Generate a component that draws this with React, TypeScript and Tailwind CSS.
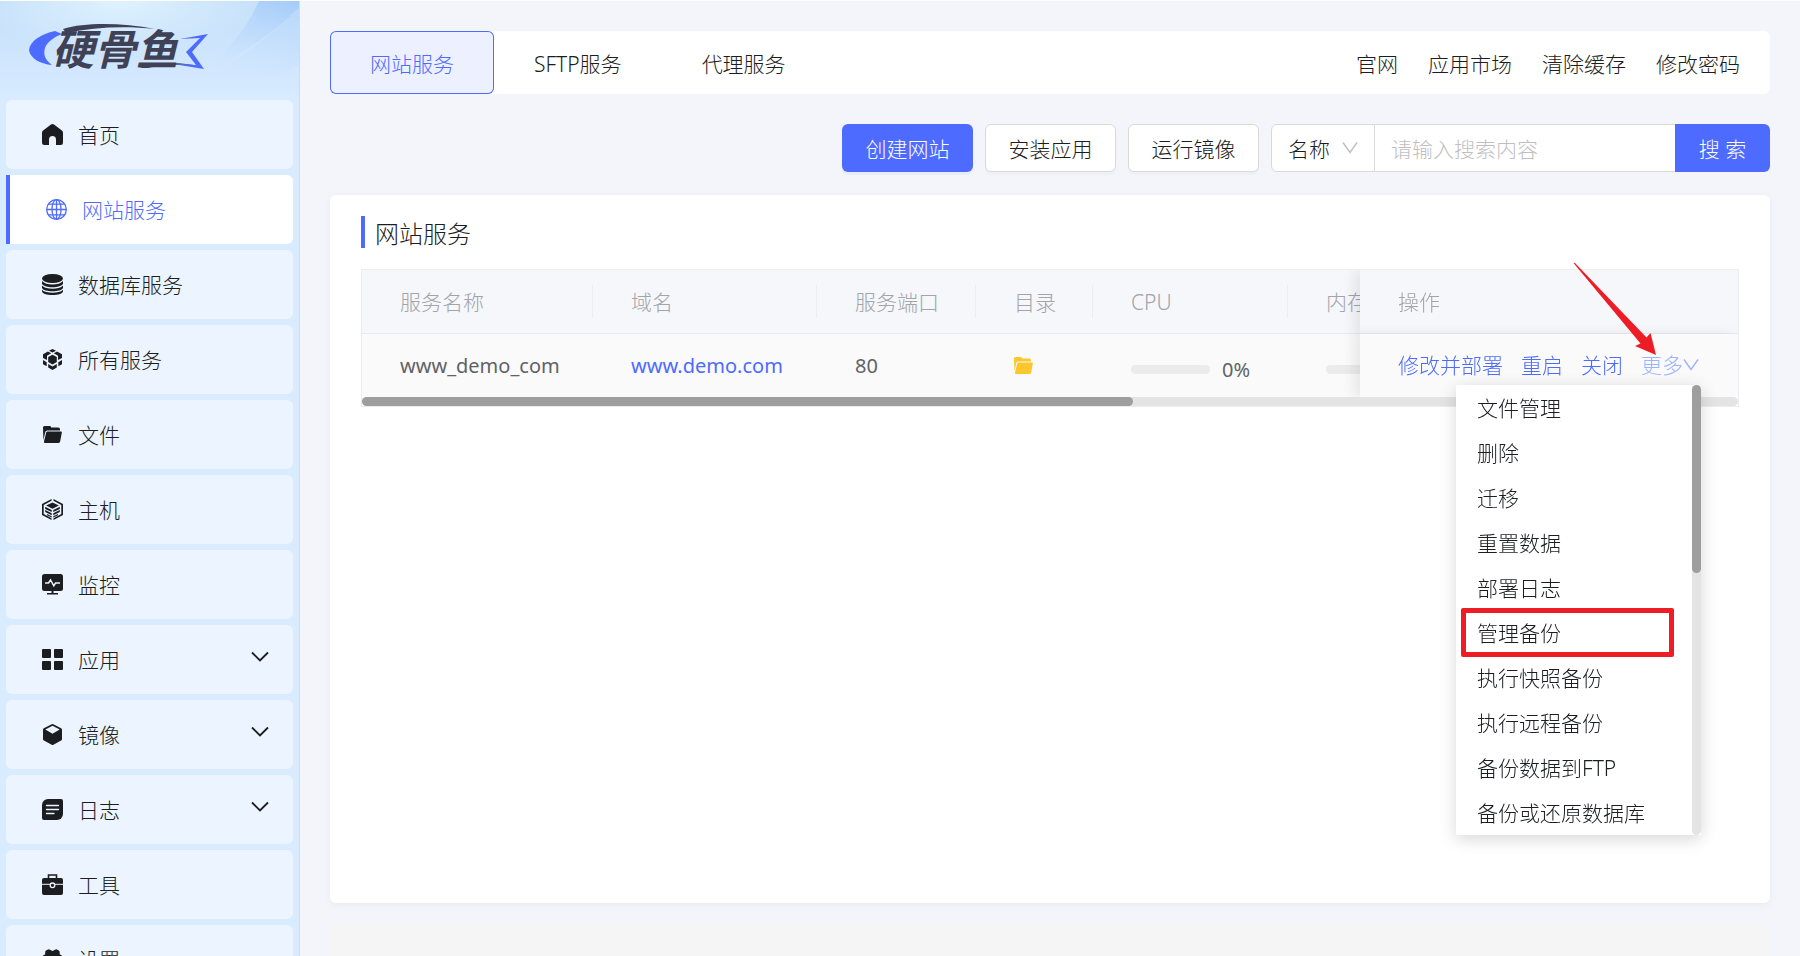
import React from 'react'
import clsx from 'clsx'

interface IconProps {
  className?: string;
}

interface NavItem {
  label: string;
  icon: (props: IconProps) => React.ReactElement;
  active?: boolean;
  expandable?: boolean;
}

function HomeIcon({ className }: IconProps) {
  return (
    <svg viewBox="0 0 21 21" className={className} fill="currentColor" aria-hidden="true">
      <path d="M9 .6a2.4 2.4 0 0 1 3 0l7.6 5.6A3.200 3.200 0 0 1 21 8.800V18.500a2.500 2.500 0 0 1-2.500 2.500H14v-5.500a3.500 3.500 0 0 0-7 0V21H2.500A2.500 2.500 0 0 1 0 18.500V8.800a3.200 3.200 0 0 1 1.400-2.600Z" />
    </svg>
  )
}

function GlobeIcon({ className }: IconProps) {
  return (
    <svg viewBox="0 0 21 21" className={className} fill="none" stroke="currentColor" strokeWidth="1.300" aria-hidden="true">
      <circle cx="10.500" cy="10.500" r="9.800" />
      <ellipse cx="10.500" cy="10.500" rx="4.500" ry="9.800" />
      <path d="M10.500 .7v19.600M.7 10.500h19.600M2.500 5.200h16M2.500 15.800h16" />
    </svg>
  )
}

function DatabaseIcon({ className }: IconProps) {
  return (
    <svg viewBox="0 0 21 21" className={className} fill="currentColor" aria-hidden="true">
      <ellipse cx="10.500" cy="4.500" rx="10.500" ry="4.500" />
      <path d="M0 7c2 2.500 6 3.400 10.500 3.400S19 9.500 21 7v2.700c-1 2.300-5.500 3.500-10.500 3.500S1 12 0 9.700Z" />
      <path d="M0 11.500c2 2.500 6 3.200 10.500 3.200S19 14 21 11.500V14c-1 2.300-5.500 3.300-10.500 3.300S1 16.300 0 14Z" />
      <path d="M0 15.800c2 2.300 6 3 10.500 3s8.500-.7 10.500-3v1.500c0 2.300-4.700 3.700-10.500 3.700S0 19.600 0 17.300Z" />
    </svg>
  )
}

function ServicesIcon({ className }: IconProps) {
  return (
    <svg viewBox="0 0 21 21" className={className} fill="currentColor" aria-hidden="true">
      <path d="m10.500 5.700 4.300 2.400v4.900l-4.300 2.400L6.200 13V8.100Z" />
      <path d="M10.500 0 14 1.700 10.500 3.600 7 1.700Z" />
      <path d="m5.900 2.400 3.300 1.900L5 6.800v4.300L1 8.900V5.300Z" />
      <path d="m15.100 2.400-3.300 1.900L16 6.800v4.300l4-2.200V5.300Z" />
      <path d="m1 11 3.700 2.200v4L1 15.200Z" />
      <path d="m20 11-3.700 2.200v4l3.700-2Z" />
      <path d="m6.200 15.100 4.300 2.300 4.300-2.300v3.500L10.500 21l-4.300-2.400Z" />
    </svg>
  )
}

function FolderIcon({ className }: IconProps) {
  return (
    <svg viewBox="0 0 19 17" className={className} fill="currentColor" aria-hidden="true">
      <path d="M0 1.500A1.500 1.500 0 0 1 1.500 0h5.300a1.500 1.500 0 0 1 1.400 1.500h7A1.800 1.800 0 0 1 17 3.300v1.100H4.200A2 2 0 0 0 2.300 6L.4 14Z" />
      <path d="M4.600 5.400h13.200a1 1 0 0 1 1 1.300l-1.600 8.600A1.800 1.800 0 0 1 15.400 17H2.300A1.200 1.200 0 0 1 1 15.500L3.200 6.600a1.600 1.600 0 0 1 1.400-1.200Z" />
    </svg>
  )
}

function HostIcon({ className }: IconProps) {
  return (
    <svg viewBox="0 0 21 21" className={className} fill="currentColor" aria-hidden="true">
      <path d="M9.500 0v1.800L1.700 5.900v9.200l7.800 4.100V21L0 16V5ZM11.500 0v1.800l7.800 4.100v9.200l-7.800 4.100V21L21 16V5Z" />
      <path d="m10.500 3.400 6.400 3.200-6.400 3.200-6.400-3.200Z" />
      <path d="m3.200 7.800 6.500 3.300v2L3.200 9.900ZM3.200 11.100l6.500 3.200v2l-6.500-3.200ZM5 15l4.700 2.200v1.300L5 16.300Z" />
      <path d="m17.800 7.800-6.500 3.300v2l6.500-3.200ZM17.800 11.100l-6.500 3.200v2l6.500-3.200ZM16 15l-4.700 2.200v1.300l4.700-2.200Z" />
    </svg>
  )
}

function MonitorIcon({ className }: IconProps) {
  return (
    <svg viewBox="0 0 21 21" className={className} aria-hidden="true">
      <rect width="21" height="17" y="0" rx="2.500" fill="currentColor" />
      <path d="M9.500 17h2v2h-2zM5 19h11v1.500H5z" fill="currentColor" />
      <path d="M3 9h3.500l2-3 3.300 5.800L13.500 9H18" fill="none" stroke="#ecf4ff" strokeWidth="1.500" />
    </svg>
  )
}

function AppsIcon({ className }: IconProps) {
  return (
    <svg viewBox="0 0 21 21" className={className} fill="currentColor" aria-hidden="true">
      <rect width="9" height="9" rx="1" />
      <rect x="12" width="9" height="9" rx="1" />
      <rect y="12" width="9" height="9" rx="1" />
      <rect x="12" y="12" width="9" height="9" rx="1" />
    </svg>
  )
}

function ImageBoxIcon({ className }: IconProps) {
  return (
    <svg viewBox="0 0 21 21" className={className} aria-hidden="true">
      <path d="M9.700.3a1.700 1.700 0 0 1 1.600 0l7.800 4a1.600 1.600 0 0 1 .9 1.400v9.400a1.700 1.700 0 0 1-.9 1.500l-7.700 4.200a1.700 1.700 0 0 1-1.700 0l-7.800-4.200a1.700 1.700 0 0 1-.9-1.500V5.700a1.600 1.600 0 0 1 .9-1.400Z" fill="currentColor" />
      <path d="m10.500 1.700 7.200 3.900-7.200 4.200-7.200-4.200Z" fill="#ecf4ff" />
    </svg>
  )
}

function LogIcon({ className }: IconProps) {
  return (
    <svg viewBox="0 0 21 21" className={className} aria-hidden="true">
      <path d="M6 0h13a2 2 0 0 1 2 2v13a6 6 0 0 1-6 6H2a2 2 0 0 1-2-2V6a6 6 0 0 1 6-6Z" fill="currentColor" />
      <path d="M4.500 6.500h12M4.500 10.500h12M4.500 14.500h7.500" stroke="#ecf4ff" strokeWidth="1.300" strokeLinecap="round" />
    </svg>
  )
}

function ToolIcon({ className }: IconProps) {
  return (
    <svg viewBox="0 0 21 21" className={className} aria-hidden="true">
      <path d="M6.500 4.500V1h8v3.500" fill="none" stroke="currentColor" strokeWidth="1.600" />
      <rect y="4" width="21" height="17" rx="2" fill="currentColor" />
      <path d="M0 10.300h21" stroke="#ecf4ff" strokeWidth="1" />
      <circle cx="10.500" cy="11.300" r="2.300" fill="currentColor" stroke="#ecf4ff" strokeWidth="1.300" />
    </svg>
  )
}

function SettingsIcon({ className }: IconProps) {
  return (
    <svg viewBox="0 0 21 21" className={className} aria-hidden="true">
      <path d="M6 .4a2 2 0 0 1 2 .3l2.500 1.400L13 .7a2 2 0 0 1 2-.3l1.800 1a2 2 0 0 1 .9 1.800v2l2 1.400a2 2 0 0 1 1 1.700v4.400a2 2 0 0 1-1 1.700l-2 1.400v2a2 2 0 0 1-1 1.800l-2 1a2 2 0 0 1-2-.3l-2.200-1.400-2.500 1.400a2 2 0 0 1-2 .3l-2-1a2 2 0 0 1-.8-1.800v-2l-2-1.400a2 2 0 0 1-1-1.700V8.300a2 2 0 0 1 1-1.700l2-1.400v-2a2 2 0 0 1 .8-1.800Z" fill="currentColor" />
      <circle cx="10.500" cy="10.500" r="3.500" fill="#ecf4ff" />
    </svg>
  )
}

function Chevron({ className }: IconProps) {
  return (
    <svg viewBox="0 0 18 12" className={className} fill="none" stroke="currentColor" strokeWidth="1.800" aria-hidden="true">
      <path d="m1 1.500 8 8 8-8" />
    </svg>
  )
}

function ThinChevron({ className }: IconProps) {
  return (
    <svg viewBox="0 0 16 12" className={className} fill="none" stroke="currentColor" strokeWidth="1.400" aria-hidden="true">
      <path d="m1 .5 7 10 7-10" />
    </svg>
  )
}

const navItems: NavItem[] = [
  { label: '首页', icon: HomeIcon },
  { label: '网站服务', icon: GlobeIcon, active: true },
  { label: '数据库服务', icon: DatabaseIcon },
  { label: '所有服务', icon: ServicesIcon },
  { label: '文件', icon: FolderIcon },
  { label: '主机', icon: HostIcon },
  { label: '监控', icon: MonitorIcon },
  { label: '应用', icon: AppsIcon, expandable: true },
  { label: '镜像', icon: ImageBoxIcon, expandable: true },
  { label: '日志', icon: LogIcon, expandable: true },
  { label: '工具', icon: ToolIcon },
  { label: '设置', icon: SettingsIcon },
]

const tabs = ['网站服务', 'SFTP服务', '代理服务']
const links = ['官网', '应用市场', '清除缓存', '修改密码']
const columns = ['服务名称', '域名', '服务端口', '目录', 'CPU']
const menuItems = [
  '文件管理',
  '删除',
  '迁移',
  '重置数据',
  '部署日志',
  '管理备份',
  '执行快照备份',
  '执行远程备份',
  '备份数据到FTP',
  '备份或还原数据库',
]

function Logo() {
  return (
    <div className="relative h-[52px] w-[184px]">
      <svg viewBox="0 0 184 52" className="absolute inset-0" aria-hidden="true">
        <path d="M27 10C13 13 2 20 1 29c1 8 11 14 23 15C17 39 15 33 17 27c2-6 9-11 17-14Z" fill="#4d6bff" />
        <path d="M35 8C58 1 95 2 127 8 98 5 66 6 38 12Z" fill="#3f4257" />
        <path d="M110 47c20-5 38-6 56-3-20-1-34 0-46 3Z" fill="#3f4257" />
        <path d="m152 18 28-5-16 18 12 17-31-5 23 1-10-13 14-14Z" fill="#4d6bff" />
      </svg>
      <span className="absolute left-[24px] top-[8px] text-[42px] leading-[40px] font-bold italic text-[#3f4257]">硬骨鱼</span>
    </div>
  )
}

function Sidebar() {
  return (
    <aside className="w-[300px] shrink-0 overflow-hidden border-r border-[#c8def5] bg-[#d8ebff]">
      <div className="relative h-[99px] bg-linear-to-b from-[#c4dffa] to-[#d8ebff] px-7 pt-[20px]">
        <svg viewBox="0 0 300 93" preserveAspectRatio="none" className="absolute inset-0 h-full w-full" aria-hidden="true">
          <defs>
            <radialGradient id="glow" cx="0.4" cy="0" r="0.5">
              <stop offset="0" stopColor="#dff2fe" />
              <stop offset="1" stopColor="#dff2fe" stopOpacity="0" />
            </radialGradient>
            <linearGradient id="wave" x1="1" y1="0" x2="0.500" y2="1">
              <stop offset="0" stopColor="#9cc6fa" />
              <stop offset="1" stopColor="#b9d8fc" stopOpacity="0" />
            </linearGradient>
          </defs>
          <rect width="300" height="93" fill="url(#glow)" />
          <path d="M260 0c-12 24-30 48-62 68 40-14 74-36 102-62V0Z" fill="url(#wave)" opacity="0.800" />
          <path d="M300 6c-28 26-62 52-102 72 40 2 80-6 102-18Z" fill="url(#wave)" opacity="0.350" />
        </svg>
        <Logo />
      </div>
      <nav>
        <ul className="flex flex-col gap-1.5 px-1.5">
          {navItems.map(({ label, icon: Icon, active, expandable }) => (
            <li key={label}>
              <a
                href="#"
                className={clsx(
                  'flex h-[69px] items-center gap-[15px] pl-9 pr-6',
                  active
                    ? 'rounded-r-md border-l-4 border-[#4d6bff] bg-white text-[#4d6bff]'
                    : 'rounded-md bg-[#ecf4ff] text-[#1b1d21]'
                )}
              >
                <Icon className={Icon === FolderIcon ? 'mx-px h-[17px] w-[19px]' : 'size-[21px]'} />
                <span className="grow">{label}</span>
                {expandable && <Chevron className="mb-1.5 h-3 w-[18px]" />}
              </a>
            </li>
          ))}
        </ul>
      </nav>
    </aside>
  )
}

function TopBar() {
  return (
    <header className="flex h-[63px] items-stretch justify-between rounded-md bg-white">
      <nav className="flex">
        {tabs.map((tab, i) => (
          <button
            key={tab}
            className={clsx(
              'px-10 pt-0.5',
              i === 0 && 'rounded-md bg-[#edf0ff] text-[#4d6bff] ring-1 ring-inset ring-[#4d6bff]'
            )}
          >
            {tab}
          </button>
        ))}
      </nav>
      <div className="flex items-center gap-[30px] pr-[30px] pt-0.5">
        {links.map((link) => (
          <a key={link} href="#">{link}</a>
        ))}
      </div>
    </header>
  )
}

function Toolbar() {
  return (
    <div className="mt-[30px] flex h-12 justify-end gap-3">
      <button className="w-[131px] rounded-md bg-[#4d6bff] pt-0.5 text-white shadow-[0_3px_0_#e9edfb]">创建网站</button>
      <button className="w-[131px] rounded-md border border-[#d9d9d9] bg-white pt-0.5 shadow-[0_3px_0_#eff0f3]">安装应用</button>
      <button className="w-[131px] rounded-md border border-[#d9d9d9] bg-white pt-0.5 shadow-[0_3px_0_#eff0f3]">运行镜像</button>
      <form className="flex">
        <div className="relative flex">
          <select aria-label="搜索字段" className="w-[104px] appearance-none rounded-l-md border border-[#d9d9d9] bg-white pt-0.5 pl-4">
            <option>名称</option>
          </select>
          <ThinChevron className="pointer-events-none absolute right-[17px] top-[18px] h-3 w-4 text-[#bfbfbf]" />
        </div>
        <input
          type="text"
          aria-label="搜索内容"
          placeholder="请输入搜索内容"
          className="w-[300px] border-y border-[#d9d9d9] bg-white px-4 pt-0.5 placeholder:text-[#bfbfbf]"
        />
        <button type="button" className="w-[95px] rounded-r-md bg-[#4d6bff] pt-0.5 text-white">搜 索</button>
      </form>
    </div>
  )
}

function UsageBar({ value }: { value?: string }) {
  return (
    <div className="flex items-center gap-3 pt-2">
      <div className="h-[9px] w-[79px] shrink-0 rounded-full bg-[#ebebeb]" />
      {value && <span>{value}</span>}
    </div>
  )
}

function ServiceTable() {
  return (
    <div className="border border-[#ebedf3]">
      <div className="overflow-hidden">
        <table className="w-[2459px] table-fixed border-separate border-spacing-0 text-left">
          <colgroup>
            <col className="w-[231px]" />
            <col className="w-[224px]" />
            <col className="w-[159px]" />
            <col className="w-[117px]" />
            <col className="w-[195px]" />
            <col />
            <col className="w-[378px]" />
          </colgroup>
          <thead className="text-[#a2a4a9]">
            <tr className="h-[64px]">
              {columns.map((column) => (
                <th key={column} className="border-b border-[#e8eaf2] bg-[#f5f7fb] p-0 font-light">
                  <div className="flex h-[33px] items-center border-r border-[#ededed] pl-[38px]">{column}</div>
                </th>
              ))}
              <th className="border-b border-[#e8eaf2] bg-[#f5f7fb] p-0 pl-[38px] font-light">内存</th>
              <th className="sticky right-0 border-b border-[#e8eaf2] bg-[#f5f7fb] p-0 pl-[38px] font-light shadow-[-6px_0_12px_rgba(0,0,0,0.080)]">
                操作
              </th>
            </tr>
          </thead>
          <tbody className="text-xl font-normal text-[#606266]">
            <tr className="h-[63px]">
              <td className="bg-[#fafafa] p-0 pl-[38px]">www_demo_com</td>
              <td className="bg-[#fafafa] p-0 pl-[38px]">
                <a href="#" className="text-[#4d6bff]">www.demo.com</a>
              </td>
              <td className="bg-[#fafafa] p-0 pl-[38px]">80</td>
              <td className="bg-[#fafafa] p-0 pl-[38px]">
                <button aria-label="目录" className="block text-[#fcc62d]">
                  <FolderIcon className="h-[17px] w-[19px]" />
                </button>
              </td>
              <td className="bg-[#fafafa] p-0 pl-[38px]"><UsageBar value="0%" /></td>
              <td className="bg-[#fafafa] p-0 pl-[38px]"><UsageBar /></td>
              <td className="sticky right-0 bg-[#fafafa] p-0 pl-[38px] text-[21px] font-light shadow-[-6px_0_12px_rgba(0,0,0,0.080)]">
                <div className="flex items-center gap-[18px] text-[#4d6bff]">
                  <button>修改并部署</button>
                  <button>重启</button>
                  <button>关闭</button>
                  <button className="flex items-center text-[#9db3ff]">
                    更多
                    <ThinChevron className="h-3 w-4" />
                  </button>
                </div>
              </td>
            </tr>
          </tbody>
        </table>
      </div>
      <div className="h-[9px] rounded-full bg-[#e4e4e4]">
        <div className="h-full w-[56%] rounded-full bg-[#9e9e9e]" />
      </div>
    </div>
  )
}

function MoreMenu() {
  return (
    <div className="absolute right-[38px] top-[116px] flex w-[245px] bg-white shadow-[0_4px_16px_rgba(0,0,0,0.160)]">
      <ul className="grow">
        {menuItems.map((item) => (
          <li key={item} className="relative">
            <button className="h-[45px] w-full pl-[21px] text-left">{item}</button>
            {item === '管理备份' && (
              <div className="pointer-events-none absolute -inset-y-0.5 left-[5px] right-[18px] rounded-xs border-[5px] border-[#ee1c25]" />
            )}
          </li>
        ))}
      </ul>
      <div className="w-[9px] rounded-full bg-[#e4e4e4]">
        <div className="h-[188px] rounded-full bg-[#9e9e9e]" />
      </div>
    </div>
  )
}

export default function App() {
  return (
    <div className="flex h-screen overflow-hidden border-t border-white bg-[#f4f5fa] font-['Noto_Sans','Noto_Sans_CJK_SC',sans-serif] text-[21px] leading-[30px] font-light text-[#1b1d21]">
      <Sidebar />
      <main className="flex min-w-0 grow flex-col px-[30px] pt-[30px]">
        <TopBar />
        <Toolbar />
        <section className="mt-[23px] grow rounded-md bg-white px-[31px] pt-[21px] shadow-[0_2px_8px_rgba(0,0,0,0.050)]">
          <h1 className="flex h-8 items-center border-l-4 border-[#4d6bff] pl-2.5 pt-1 text-2xl font-light">网站服务</h1>
          <div className="relative mt-[21px]">
            <ServiceTable />
            <MoreMenu />
            <svg viewBox="0 0 84 94" className="pointer-events-none absolute right-[82px] -top-1.5 h-[94px] w-[84px]" aria-hidden="true">
              <path d="M.5 0 2 0 73.500 74.500 77.500 70l5.500 22-21-9 5.500-2.500Z" fill="#ee1c25" />
            </svg>
          </div>
        </section>
        <footer className="mt-[22px] h-[31px] shrink-0 bg-[#f5f5f5]" />
      </main>
    </div>
  )
}
